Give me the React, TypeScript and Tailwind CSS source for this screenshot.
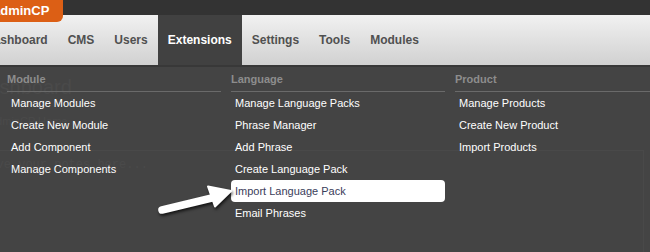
import React from 'react';

const NAV = ['Dashboard', 'CMS', 'Users', 'Extensions', 'Settings', 'Tools', 'Modules'];

const COLUMNS = [
  { title: 'Module', items: ['Manage Modules', 'Create New Module', 'Add Component', 'Manage Components'] },
  {
    title: 'Language',
    items: ['Manage Language Packs', 'Phrase Manager', 'Add Phrase', 'Create Language Pack', 'Import Language Pack', 'Email Phrases'],
  },
  { title: 'Product', items: ['Manage Products', 'Create New Product', 'Import Products'] },
];

const Arrow = () => (
  <svg
    className="absolute left-0 top-0 pointer-events-none"
    width="650"
    height="252"
    style={{ filter: 'drop-shadow(1px 2px 1.5px rgba(0,0,0,0.7))' }}
  >
    <line x1="162" y1="210" x2="216" y2="197" stroke="#fff" strokeWidth="7.5" strokeLinecap="round" />
    <polygon points="231,191 208,186.5 215,206.5" fill="#fff" stroke="#fff" strokeWidth="2" strokeLinejoin="round" />
  </svg>
);

export default function App() {
  return (
    <div
      className="relative w-[650px] h-[252px] overflow-hidden bg-[#444]"
      style={{ fontFamily: '"Liberation Sans", Arial, sans-serif' }}
    >
      {/* top strip */}
      <div className="h-[15px] bg-[#333]" />

      {/* nav bar */}
      <nav className="h-[50px] flex bg-gradient-to-b from-[#f1f1f1] to-[#d1d1d1] -ml-[25px]">
        {NAV.map((n) => (
          <div
            key={n}
            className={
              'px-[10px] flex items-center text-[12px] font-bold ' +
              (n === 'Extensions' ? 'bg-[#414141] text-white' : 'text-[#505050]')
            }
          >
            {n}
          </div>
        ))}
      </nav>
      <div className="h-[2px] bg-[#383838]" />

      {/* page underneath the dropdown, seen through it */}
      <div className="pt-[8px] text-[#535353]">
        <h1 className="text-[20px] leading-[24px] -ml-[26px]">Dashboard</h1>
        <p className="mt-[14px] text-[11px] -ml-[10px]">adminCP Home</p>
        <div className="mt-[20px] mr-[6px] h-[120px] border border-[#505050] -ml-[2px] pt-[5px]">
          <div className="text-[12px] -ml-[24px]" style={{ fontFamily: '"Liberation Mono", monospace' }}>
            Leave your notes here...
          </div>
        </div>
      </div>

      {/* orange logo tab */}
      <div className="absolute left-0 top-0 w-[63px] h-[22px] bg-[#dc5f15] rounded-br-[6px] flex items-center overflow-hidden">
        <span className="-ml-[7px] text-white text-[13px] font-bold">adminCP</span>
      </div>

      {/* dropdown */}
      <div className="absolute left-0 top-[67px] w-[680px] h-[185px] bg-[#444]/60 pl-[7px] flex gap-[10px]">
        {COLUMNS.map((c) => (
          <div key={c.title} className="w-[214px] shrink-0">
            <div className="h-[25px] pt-[1px] flex items-center border-b border-[#6a6a6a] text-[11px] font-bold text-[#8d8d8d]">
              {c.title}
            </div>
            {c.items.map((it) => (
              <div
                key={it}
                className={
                  'h-[22px] pl-[4px] flex items-center text-[11px] ' +
                  (it === 'Import Language Pack' ? 'bg-white rounded-[4px] text-[#3a3d5a]' : 'text-white')
                }
              >
                {it}
              </div>
            ))}
          </div>
        ))}
      </div>

      <Arrow />
    </div>
  );
}
